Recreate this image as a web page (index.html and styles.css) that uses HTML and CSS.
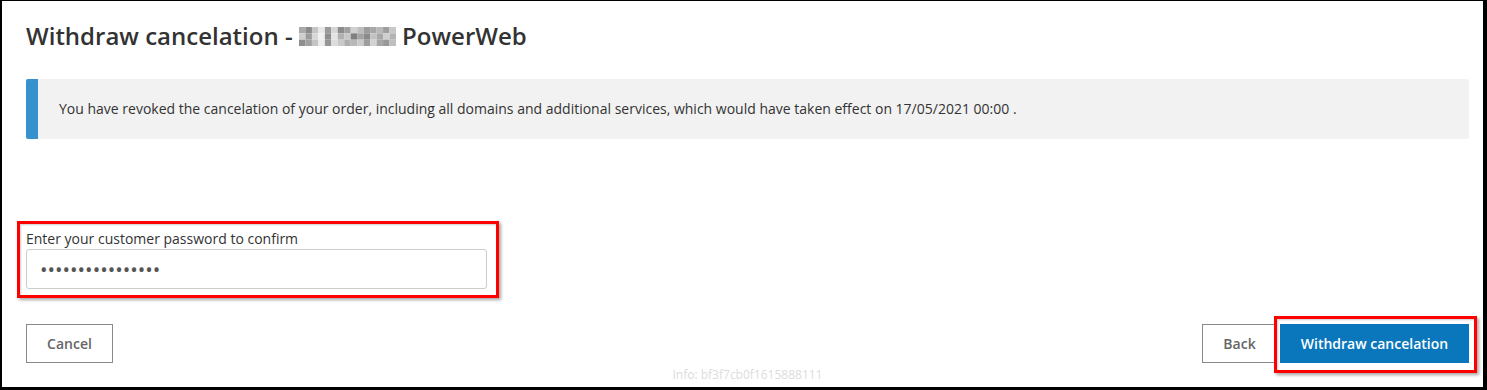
FILE: index.html
```html
<!DOCTYPE html>
<html lang="en">
<head>
<meta charset="utf-8">
<title>Withdraw cancelation</title>
<link rel="stylesheet" href="styles.css">
</head>
<body>
<div class="frame">
  <h1 class="title">Withdraw cancelation - <svg class="mosaic" width="97" height="19" viewBox="0 0 90 18" preserveAspectRatio="none" aria-hidden="true">
    <rect x="0" y="0" width="6" height="6" fill="#a9a9a9"/><rect x="6" y="0" width="6" height="6" fill="#8a8a8a"/><rect x="12" y="0" width="6" height="6" fill="#c5c5c5"/><rect x="18" y="0" width="6" height="6" fill="#e8e8e8"/><rect x="24" y="0" width="6" height="6" fill="#9a9a9a"/><rect x="30" y="0" width="6" height="6" fill="#d6d6d6"/><rect x="36" y="0" width="6" height="6" fill="#8c8c8c"/><rect x="42" y="0" width="6" height="6" fill="#a0a0a0"/><rect x="48" y="0" width="6" height="6" fill="#d0d0d0"/><rect x="54" y="0" width="6" height="6" fill="#bdbdbd"/><rect x="60" y="0" width="6" height="6" fill="#9c9c9c"/><rect x="66" y="0" width="6" height="6" fill="#a7a7a7"/><rect x="72" y="0" width="6" height="6" fill="#b9b9b9"/><rect x="78" y="0" width="6" height="6" fill="#9e9e9e"/><rect x="84" y="0" width="6" height="6" fill="#c8c8c8"/>
    <rect x="0" y="6" width="6" height="6" fill="#cfcfcf"/><rect x="6" y="6" width="6" height="6" fill="#9b9b9b"/><rect x="12" y="6" width="6" height="6" fill="#d8d8d8"/><rect x="18" y="6" width="6" height="6" fill="#f0f0f0"/><rect x="24" y="6" width="6" height="6" fill="#8e8e8e"/><rect x="30" y="6" width="6" height="6" fill="#e4e4e4"/><rect x="36" y="6" width="6" height="6" fill="#b0b0b0"/><rect x="42" y="6" width="6" height="6" fill="#c7c7c7"/><rect x="48" y="6" width="6" height="6" fill="#7f7f7f"/><rect x="54" y="6" width="6" height="6" fill="#a3a3a3"/><rect x="60" y="6" width="6" height="6" fill="#8a8a8a"/><rect x="66" y="6" width="6" height="6" fill="#c2c2c2"/><rect x="72" y="6" width="6" height="6" fill="#a8a8a8"/><rect x="78" y="6" width="6" height="6" fill="#d0d0d0"/><rect x="84" y="6" width="6" height="6" fill="#b4b4b4"/>
    <rect x="0" y="12" width="6" height="6" fill="#8f8f8f"/><rect x="6" y="12" width="6" height="6" fill="#a1a1a1"/><rect x="12" y="12" width="6" height="6" fill="#c4c4c4"/><rect x="18" y="12" width="6" height="6" fill="#ececec"/><rect x="24" y="12" width="6" height="6" fill="#959595"/><rect x="30" y="12" width="6" height="6" fill="#dcdcdc"/><rect x="36" y="12" width="6" height="6" fill="#c9c9c9"/><rect x="42" y="12" width="6" height="6" fill="#aeaeae"/><rect x="48" y="12" width="6" height="6" fill="#b8b8b8"/><rect x="54" y="12" width="6" height="6" fill="#cacaca"/><rect x="60" y="12" width="6" height="6" fill="#9d9d9d"/><rect x="66" y="12" width="6" height="6" fill="#d3d3d3"/><rect x="72" y="12" width="6" height="6" fill="#a6a6a6"/><rect x="78" y="12" width="6" height="6" fill="#999999"/><rect x="84" y="12" width="6" height="6" fill="#bfbfbf"/>
  </svg> PowerWeb</h1>

  <div class="notice">
    <p class="notice-text">You have revoked the cancelation of your order, including all domains and additional services, which would have taken effect on 17/05/2021 00:00 .</p>
  </div>

  <div class="field annot annot-field">
    <label class="field-label" for="pw">Enter your customer password to confirm</label>
    <input class="field-input" id="pw" type="password" value="abcdefghijklmnop">
  </div>

  <div class="actions">
    <button class="btn btn-cancel" type="button">Cancel</button>
    <div class="actions-right">
      <button class="btn btn-back" type="button">Back</button>
      <span class="annot annot-btn"><button class="btn btn-primary" type="button">Withdraw cancelation</button></span>
    </div>
  </div>

  <div class="info">Info: bf3f7cb0f1615888111</div>
</div>
</body>
</html>
```

FILE: styles.css
```css
* { box-sizing: border-box; }
html, body { margin: 0; padding: 0; background: #fff; }
body { font-family: "Open Sans", "Liberation Sans", sans-serif; color: #333; }

.frame {
  width: 1487px;
  height: 390px;
  overflow: hidden;
  border-style: solid;
  border-color: #000;
  border-width: 1px 4px 3px 2px;
  padding: 19px 14px 0 24px;
  display: flex;
  flex-direction: column;
}

.title {
  margin: 0;
  font-size: 24px;
  font-weight: 600;
  line-height: 32px;
  color: #333;
}
.mosaic { vertical-align: -1px; }

.notice {
  margin-top: 27px;
  background: #f2f2f2;
  border-left: 12px solid #3592cf;
  border-radius: 2px;
  padding: 20px 20px 20px 21px;
}
.notice-text {
  margin: 0;
  font-size: 14px;
  line-height: 20px;
  color: #333;
}

.field {
  margin-top: 88px;
  width: 461px;
  display: flex;
  flex-direction: column;
}
.field-label {
  font-size: 14px;
  line-height: 20px;
  color: #333;
}
.field-input {
  height: 40px;
  width: 461px;
  border: 1px solid #cccccc;
  border-radius: 3px;
  padding: 0 13px;
  font-family: "Open Sans", "Liberation Sans", sans-serif;
  font-size: 20px;
  letter-spacing: 0;
  color: #555;
  background: #fff;
  outline: none;
}

.actions {
  margin-top: 35px;
  display: flex;
  justify-content: space-between;
  align-items: flex-start;
}
.actions-right {
  display: flex;
  gap: 3px;
}
.btn {
  height: 39px;
  font-family: "Open Sans", "Liberation Sans", sans-serif;
  font-size: 14px;
  font-weight: 600;
  background: #fff;
  color: #666;
  border: 1px solid #8a8a8a;
  border-radius: 0;
  cursor: pointer;
  display: block;
}
.btn-cancel { width: 87px; padding: 0; }
.btn-back { width: 75px; padding: 0; }
.btn-primary {
  width: 189px;
  padding: 0;
  background: #0a77bd;
  border-color: #0a77bd;
  color: #fff;
}

.info {
  margin-top: 4px;
  text-align: center;
  font-size: 12px;
  line-height: 16px;
  color: #dcdcdc;
}

/* screenshot annotation highlight boxes */
.annot { position: relative; display: block; }
.annot::after {
  content: "";
  position: absolute;
  border: 3px solid #ff0000;
  box-shadow: 2px 2px 3px rgba(0, 0, 0, 0.35), inset 1px 1px 2px rgba(0, 0, 0, 0.2);
  pointer-events: none;
}
.annot-field::after { top: -6px; left: -9px; right: -12px; bottom: -9px; }
.annot-btn::after { top: -8px; left: -6px; right: -8px; bottom: -10px; }
```
